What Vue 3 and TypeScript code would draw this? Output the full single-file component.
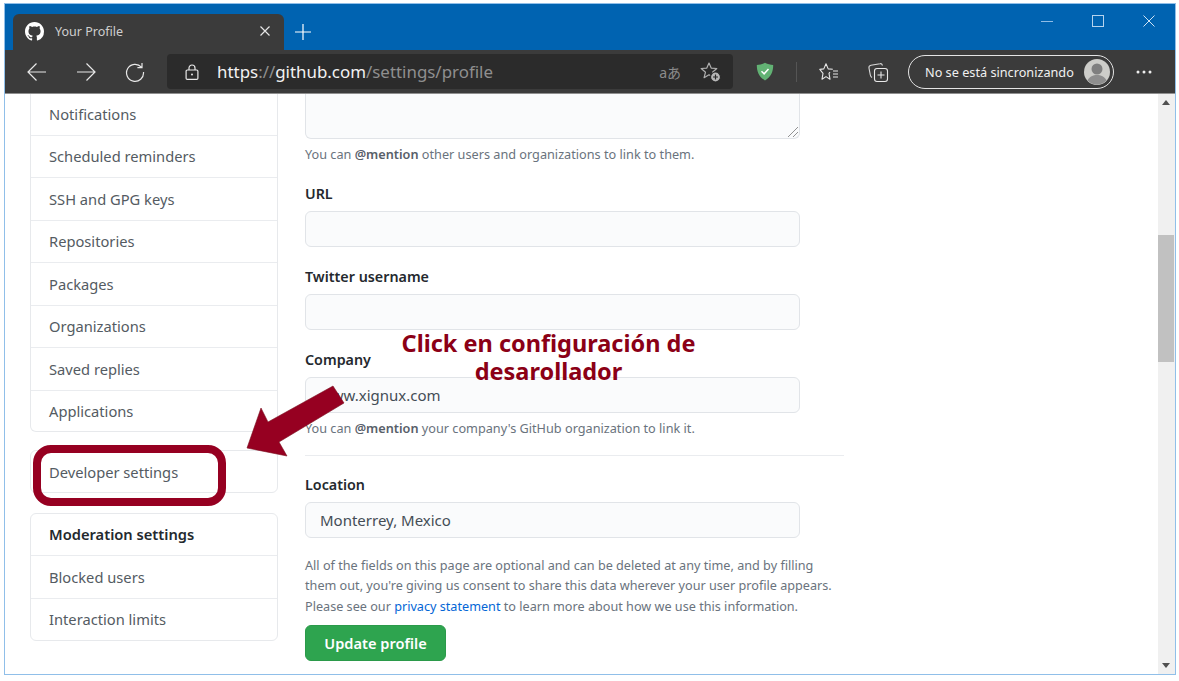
<script setup lang="ts">
// Browser window showing the GitHub profile settings page, with tutorial annotation on top
const settingsLinks = [
  'Notifications',
  'Scheduled reminders',
  'SSH and GPG keys',
  'Repositories',
  'Packages',
  'Organizations',
  'Saved replies',
  'Applications'
];

const moderationLinks = ['Blocked users', 'Interaction limits'];

const githubMark =
  'M8 0C3.58 0 0 3.58 0 8c0 3.54 2.29 6.53 5.47 7.59.4.07.55-.17.55-.38 0-.19-.01-.82-.01-1.49-2.01.37-2.53-.49-2.69-.94-.09-.23-.48-.94-.82-1.13-.28-.15-.68-.52-.01-.53.63-.01 1.08.58 1.23.82.72 1.21 1.87.87 2.33.66.07-.52.28-.87.51-1.07-1.78-.2-3.64-.89-3.64-3.95 0-.87.31-1.59.82-2.15-.08-.2-.36-1.02.08-2.12 0 0 .67-.21 2.2.82.64-.18 1.32-.27 2-.27.68 0 1.36.09 2 .27 1.53-1.04 2.2-.82 2.2-.82.44 1.1.16 1.92.08 2.12.51.56.82 1.27.82 2.15 0 3.07-1.87 3.75-3.65 3.95.29.25.54.73.54 1.48 0 1.07-.01 1.93-.01 2.2 0 .21.15.46.55.38A8.013 8.013 0 0016 8c0-4.42-3.58-8-8-8z';
</script>

<template>
  <div class="window">
    <!-- Title bar -->
    <div class="titlebar">
      <div class="tab">
        <svg class="tab-logo" viewBox="0 0 16 16" width="19" height="19"><path :d="githubMark" fill="#fff" /></svg>
        <span class="tab-title">Your Profile</span>
        <svg class="tab-close" viewBox="0 0 12 12" width="12" height="12"><path d="M1.5 1.5l9 9M10.5 1.5l-9 9" stroke="#e6e6e6" stroke-width="1.2" /></svg>
      </div>
      <svg class="new-tab" viewBox="0 0 16 16" width="16" height="16"><path d="M8 0v16M0 8h16" stroke="#fff" stroke-width="1.2" /></svg>
      <div class="win-controls">
        <svg viewBox="0 0 12 12" width="12" height="12"><path d="M0 6.5h12" stroke="#8fbce6" stroke-width="1" /></svg>
        <svg viewBox="0 0 12 12" width="12" height="12"><rect x="0.5" y="0.5" width="11" height="11" fill="none" stroke="#b5d3ee" stroke-width="1" /></svg>
        <svg viewBox="0 0 12 12" width="12" height="12"><path d="M.5.5l11 11M11.5.5l-11 11" stroke="#d0e3f4" stroke-width="1" /></svg>
      </div>
    </div>

    <!-- Toolbar -->
    <div class="toolbar">
      <div class="nav-buttons">
        <svg viewBox="0 0 20 20" width="20" height="20"><path d="M19 10H1.5M9.500 1.500L1 10l8.500 8.500" fill="none" stroke="#e8e8e8" stroke-width="1.2" /></svg>
        <svg viewBox="0 0 20 20" width="20" height="20"><path d="M1 10h17.500M10.500 1.500L19 10l-8.500 8.500" fill="none" stroke="#e8e8e8" stroke-width="1.2" /></svg>
        <svg viewBox="0 0 20 20" width="20" height="20"><path d="M16.400 5.200A8.500 8.500 0 1 0 18.500 10M17 1v4.600h-4.600" fill="none" stroke="#e8e8e8" stroke-width="1.2" /></svg>
      </div>
      <div class="address">
        <svg class="lock" viewBox="0 0 14 16" width="14" height="16"><path d="M4 6V4a3 3 0 0 1 6 0v2" fill="none" stroke="#e8e8e8" stroke-width="1.2" /><rect x="1.1" y="6" width="11.800" height="9.400" rx="1.200" fill="none" stroke="#e8e8e8" stroke-width="1.2" /><circle cx="7" cy="10.500" r="1" fill="#e8e8e8" /></svg>
        <span class="url"><span class="url-strong">https</span><span class="url-dim">://</span><span class="url-strong">github.com</span><span class="url-dim">/settings/profile</span></span>
        <span class="translate">aあ</span>
        <svg class="addr-star" viewBox="0 0 22 22" width="22" height="22"><path d="M9 2l2.200 5.100 5.600.4-4.300 3.700 1.400 5.500L9 13.800l-4.900 2.900 1.400-5.500-4.300-3.700 5.600-.4z" fill="none" stroke="#b0b0b0" stroke-width="1.200" stroke-linejoin="round" /><circle cx="15.500" cy="16" r="5" fill="#b8b8b8" stroke="#2b2b2b" stroke-width="1.200" /><path d="M15.500 13.500v5M13 16h5" stroke="#2b2b2b" stroke-width="1.200" /></svg>
      </div>
      <svg class="shield" viewBox="0 0 18 19" width="18" height="19"><path d="M9 .8c2.700 1.400 5.400 2 8.200 2.200 0 6.700-2.200 12-8.200 15.400C3 15 .8 9.700.8 3 3.600 2.800 6.300 2.200 9 .8z" fill="#62b274" /><path d="M5.500 9.200l2.600 2.600 4.400-4.800" fill="none" stroke="#fff" stroke-width="1.500" /></svg>
      <span class="divider"></span>
      <svg class="fav" viewBox="0 0 20 20" width="20" height="20"><path d="M13.800 7.300l-4.600-.4L7 1.800 4.800 6.900l-4 .5L4 11.300l-1 5.900 4-2.600 4 2.600-1-5.900 1-1.100" fill="none" stroke="#e8e8e8" stroke-width="1.100" stroke-linejoin="round" /><path d="M14 9h5M14 12h5M14 15h5" stroke="#e8e8e8" stroke-width="1.100" /></svg>
      <svg class="collections" viewBox="0 0 22 22" width="22" height="22"><rect x="7.500" y="7.500" width="13" height="13" rx="2.500" fill="none" stroke="#e8e8e8" stroke-width="1.100" /><path d="M14 10.500v7M10.500 14h7" stroke="#e8e8e8" stroke-width="1.100" /><path d="M15.500 4.500C15 3 14 2.500 13 2.700L4 4.200C2.500 4.500 1.700 5.700 2 7.200L3.300 14C3.500 15 4 16 5 16.500" fill="none" stroke="#d8d8d8" stroke-width="1.100" /></svg>
      <div class="sync-pill">
        <span>No se está sincronizando</span>
        <svg class="avatar" viewBox="0 0 26 26" width="26" height="26"><circle cx="13" cy="13" r="13" fill="#cdcdc9" /><circle cx="13" cy="10" r="5.500" fill="#7f7f7f" /><path d="M3.500 21.500c2-4 5.500-5.500 9.500-5.500s7.500 1.500 9.500 5.500A13 13 0 0 1 3.500 21.500z" fill="#8e8e8e" /></svg>
      </div>
      <svg class="more" viewBox="0 0 16 4" width="16" height="4"><circle cx="2" cy="2" r="1.500" fill="#eee" /><circle cx="8" cy="2" r="1.500" fill="#eee" /><circle cx="14" cy="2" r="1.500" fill="#eee" /></svg>
    </div>

    <!-- Page -->
    <div class="viewport">
      <div class="page">
        <aside class="sidebar">
          <nav class="card card-clipped">
            <a v-for="link in settingsLinks" :key="link" class="row">{{ link }}</a>
          </nav>
          <nav class="card card-dev">
            <a class="row row-dev">Developer settings</a>
          </nav>
          <nav class="card">
            <a class="row row-head">Moderation settings</a>
            <a v-for="link in moderationLinks" :key="link" class="row">{{ link }}</a>
          </nav>
        </aside>

        <form class="form" @submit.prevent>
          <div class="bio-box">
            <svg class="resizer" viewBox="0 0 10 10" width="10" height="10"><path d="M0 10L10 0M5 10l5-5" stroke="#777" stroke-width="0.8" /></svg>
          </div>
          <p class="hint hint-bio">You can <strong>@mention</strong> other users and organizations to link to them.</p>

          <label class="label label-url">URL</label>
          <div class="input"></div>

          <label class="label label-next">Twitter username</label>
          <div class="input"></div>

          <label class="label label-next">Company</label>
          <div class="input">www.xignux.com</div>
          <p class="hint hint-company">You can <strong>@mention</strong> your company's GitHub organization to link it.</p>

          <hr class="rule" />

          <label class="label label-location">Location</label>
          <div class="input">Monterrey, Mexico</div>

          <p class="note">
            All of the fields on this page are optional and can be deleted at any time, and by filling<br />
            them out, you're giving us consent to share this data wherever your user profile appears.<br />
            Please see our <a class="link">privacy statement</a> to learn more about how we use this information.
          </p>
          <button class="update-btn" type="submit">Update profile</button>
        </form>
      </div>

      <div class="scrollbar">
        <span class="arrow-up"></span>
        <span class="thumb"></span>
        <span class="arrow-down"></span>
      </div>
    </div>

    <!-- Tutorial annotation -->
    <div class="callout">Click en configuración de<br />desarollador</div>
    <div class="highlight"></div>
    <svg class="pointer" viewBox="0 0 1179 681" width="1179" height="681">
      <polygon points="247,448 261,408 268,422 333,386 344,403 279,442 287,456" fill="#960021" stroke="#7a1020" stroke-width="0.6" />
    </svg>
  </div>
</template>

<style scoped>
.window {
  position: relative;
  box-sizing: border-box;
  width: 1172px;
  height: 672px;
  margin: 3px 0 0 4px;
  border: 1px solid #90bfe9;
  display: flex;
  flex-direction: column;
  overflow: hidden;
  background: #fff;
  font-family: "Noto Sans", "Liberation Sans", sans-serif;
}

.titlebar {
  height: 46px;
  flex: none;
  background: #0063b1;
  display: flex;
  align-items: flex-end;
  padding-left: 8px;
}

.tab {
  box-sizing: border-box;
  width: 271px;
  height: 36px;
  background: #3b3b3b;
  border-radius: 6px 6px 0 0;
  display: flex;
  align-items: center;
  padding: 0 13px 2px 12px;
}

.tab-logo {
  flex: none;
}

.tab-title {
  margin-left: 11px;
  font-size: 12.5px;
  color: #cfcfcf;
  flex: 1;
}

.new-tab {
  margin: 0 0 10px 11px;
}

.win-controls {
  margin-left: auto;
  display: flex;
  gap: 39px;
  padding: 0 20px 23px 0;
}

.toolbar {
  box-sizing: border-box;
  height: 44px;
  flex: none;
  background: #3b3b3b;
  border-bottom: 1px solid #8f8f8f;
  display: flex;
  align-items: center;
  padding-left: 22px;
}

.nav-buttons {
  display: flex;
  gap: 29px;
  flex: none;
  width: 140px;
}

.address {
  box-sizing: border-box;
  width: 566px;
  height: 35px;
  background: #2b2b2b;
  border-radius: 4px;
  display: flex;
  align-items: center;
  padding-left: 18px;
  flex: none;
}

.url {
  margin-left: 18px;
  font-size: 16.9px;
  white-space: nowrap;
}

.url-strong {
  color: #f2f2f2;
}

.url-dim {
  color: #8f8f8f;
}

.translate {
  margin-left: auto;
  font-size: 14px;
  color: #8c8c8c;
  font-family: "Noto Sans", "Noto Sans CJK JP", sans-serif;
}

.addr-star {
  margin: 0 11px 0 19px;
}

.shield {
  margin-left: 23px;
  flex: none;
}

.divider {
  width: 1px;
  height: 20px;
  background: #555;
  margin-left: 22px;
  flex: none;
}

.fav {
  margin-left: 22px;
  flex: none;
}

.collections {
  margin-left: 28px;
  flex: none;
}

.sync-pill {
  box-sizing: border-box;
  width: 206px;
  height: 34px;
  margin-left: 19px;
  border: 1.5px solid #e4e4e4;
  border-radius: 17px;
  display: flex;
  align-items: center;
  justify-content: space-between;
  padding: 0 3px 0 16px;
  color: #f0f0f0;
  font-size: 12.7px;
  flex: none;
  white-space: nowrap;
}

.avatar {
  flex: none;
}

.more {
  margin-left: 22px;
  flex: none;
}

.viewport {
  flex: 1;
  min-height: 0;
  display: flex;
  overflow: hidden;
}

.page {
  flex: 1;
  min-width: 0;
  display: flex;
  padding-left: 25px;
  align-items: flex-start;
}

.sidebar {
  width: 248px;
  flex: none;
  display: flex;
  flex-direction: column;
  gap: 18px;
  margin-top: -1px;
}

.card {
  box-sizing: border-box;
  border: 1px solid #e7e9ec;
  border-radius: 6px;
  display: flex;
  flex-direction: column;
}

.card-clipped {
  border-top: none;
  border-top-left-radius: 0;
  border-top-right-radius: 0;
}

.card-dev {
  margin-bottom: 2px;
}

.row {
  box-sizing: border-box;
  height: 42.5px;
  display: flex;
  align-items: center;
  padding-left: 18px;
  font-size: 14.7px;
  color: #545b62;
  border-bottom: 1px solid #eaecef;
}

.row:last-child {
  height: 41px;
  border-bottom: none;
}

.card-clipped .row:last-child {
  height: 40px;
}

.row-dev {
  padding-top: 1px;
}

.row-head {
  font-weight: 600;
  color: #24292e;
}

.form {
  width: 539px;
  margin-left: 27px;
  display: flex;
  flex-direction: column;
  align-items: flex-start;
}

.bio-box {
  position: relative;
  box-sizing: border-box;
  width: 495px;
  height: 45px;
  background: #fafbfc;
  border: 1px solid #e1e4e8;
  border-top: none;
  border-radius: 0 0 6px 6px;
}

.resizer {
  position: absolute;
  right: 1px;
  bottom: 1px;
}

.hint {
  margin: 0;
  font-size: 12.7px;
  line-height: 18px;
  color: #6a737d;
  white-space: nowrap;
}

.hint strong {
  font-weight: 600;
  color: #586069;
}

.hint-bio {
  margin-top: 6px;
}

.hint-company {
  margin-top: 6px;
}

.label {
  font-size: 14.3px;
  font-weight: 600;
  line-height: 20px;
  color: #24292e;
  margin-bottom: 7px;
}

.label-url {
  margin-top: 21px;
}

.label-next {
  margin-top: 20px;
}

.label-location {
  margin-top: 19px;
}

.input {
  box-sizing: border-box;
  width: 495px;
  height: 36px;
  background: #fafbfc;
  border: 1px solid #e1e4e8;
  border-radius: 6px;
  padding-left: 14px;
  display: flex;
  align-items: center;
  font-size: 15px;
  color: #444d56;
}

.rule {
  width: 539px;
  margin: 18px 0 0;
  border: none;
  border-top: 1px solid #eaecef;
}

.note {
  margin: 17px 0 0;
  font-size: 12.65px;
  line-height: 20.4px;
  color: #6a737d;
  white-space: nowrap;
}

.link {
  color: #0366d6;
}

.update-btn {
  margin-top: 9px;
  width: 141px;
  height: 36px;
  background: #2ea44f;
  border: 1px solid #2b9a4a;
  border-radius: 6px;
  color: #fff;
  font-family: inherit;
  font-size: 14.6px;
  font-weight: 600;
  padding: 0;
}

.scrollbar {
  width: 17px;
  flex: none;
  background: #f0f0f0;
  position: relative;
}

.thumb {
  position: absolute;
  top: 141px;
  left: 0;
  width: 16px;
  height: 127px;
  background: #c1c1c1;
}

.arrow-up,
.arrow-down {
  position: absolute;
  left: 4px;
  width: 0;
  height: 0;
  border-left: 4px solid transparent;
  border-right: 4px solid transparent;
}

.arrow-up {
  top: 6px;
  border-bottom: 5px solid #505050;
}

.arrow-down {
  bottom: 6px;
  border-top: 5px solid #505050;
}

.callout {
  position: absolute;
  left: 347px;
  top: 325px;
  width: 393px;
  text-align: center;
  font-size: 23.5px;
  line-height: 28px;
  font-weight: 700;
  color: #8b0016;
}

.highlight {
  position: absolute;
  box-sizing: border-box;
  left: 28px;
  top: 441px;
  width: 193px;
  height: 61px;
  border: 8px solid #960021;
  border-radius: 18px;
}

.pointer {
  position: absolute;
  left: -5px;
  top: -4px;
  pointer-events: none;
}
</style>

<style>
html,
body {
  margin: 0;
  background: #fff;
  overflow: hidden;
}
</style>
